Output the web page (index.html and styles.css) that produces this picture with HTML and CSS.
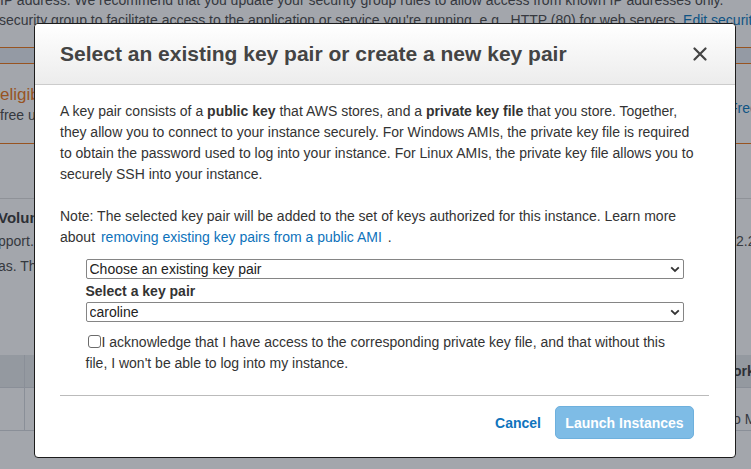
FILE: index.html
```html
<!DOCTYPE html>
<html lang="en">
<head>
<meta charset="utf-8">
<title>Select an existing key pair</title>
<link rel="stylesheet" href="styles.css">
</head>
<body>
<div class="page">
  <div class="notice">
    <p class="line">IP address. We recommend that you update your security group rules to allow access from known IP addresses only.</p>
    <p class="line line-shift">security group to facilitate access to the application or service you're running, e.g., HTTP (80) for web servers. <a class="page-link">Edit security groups</a></p>
  </div>
  <div class="strip"></div>
  <div class="warn">
    <div class="warn-left">
      <p class="warn-title">eligible</p>
      <p class="warn-text">free usage tier</p>
    </div>
    <div class="warn-right"><a class="page-link">Free tier</a></div>
  </div>
  <div class="volumes">
    <div class="vol-left">
      <p class="vol-title">Volumes</p>
      <p class="vol-text">pport.</p>
      <p class="vol-text">as. The</p>
    </div>
    <div class="vol-right">2.2</div>
  </div>
  <div class="table">
    <div class="thead">
      <div class="cell cell-narrow"></div>
      <div class="cell cell-wide"></div>
      <div class="cell cell-end th">orking</div>
    </div>
    <div class="trow">
      <div class="cell cell-narrow"></div>
      <div class="cell cell-wide"></div>
      <div class="cell cell-end">o M</div>
    </div>
  </div>
</div>
<div class="overlay"></div>

<div class="modal" role="dialog" aria-labelledby="modal-title">
  <div class="modal-header">
    <h2 id="modal-title" class="modal-title">Select an existing key pair or create a new key pair</h2>
    <button class="close" aria-label="Close">
      <svg width="14" height="14" viewBox="0 0 14 14"><path d="M1.5 1.5 L12.5 12.5 M12.5 1.5 L1.5 12.5" stroke="#444" stroke-width="2.2" stroke-linecap="round" fill="none"/></svg>
    </button>
  </div>
  <div class="modal-body">
    <p class="para">A key pair consists of a <b>public key</b> that AWS stores, and a <b>private key file</b> that you store. Together, they allow you to connect to your instance securely. For Windows AMIs, the private key file is required to obtain the password used to log into your instance. For Linux AMIs, the private key file allows you to securely SSH into your instance.</p>
    <p class="para">Note: The selected key pair will be added to the set of keys authorized for this instance. Learn more about <a class="link">removing existing key pairs from a public AMI</a> .</p>
    <div class="form">
      <div class="select-wrap">
        <select class="select"><option>Choose an existing key pair</option><option>Create a new key pair</option><option>Proceed without a key pair</option></select>
        <svg class="chevron" width="10" height="7" viewBox="0 0 10 7"><path d="M1.2 1.3 L5 5 L8.8 1.3" stroke="#333" stroke-width="1.8" fill="none"/></svg>
      </div>
      <label class="field-label">Select a key pair</label>
      <div class="select-wrap">
        <select class="select"><option>caroline</option></select>
        <svg class="chevron" width="10" height="7" viewBox="0 0 10 7"><path d="M1.2 1.3 L5 5 L8.8 1.3" stroke="#333" stroke-width="1.8" fill="none"/></svg>
      </div>
      <label class="ack"><input type="checkbox" class="check">I acknowledge that I have access to the corresponding private key file, and that without this file, I won't be able to log into my instance.</label>
    </div>
    <hr class="divider">
  </div>
  <div class="modal-footer">
    <a class="cancel">Cancel</a>
    <button class="launch">Launch Instances</button>
  </div>
</div>
</body>
</html>
```
FILE: styles.css
```css
* { box-sizing: border-box; }
html, body { margin: 0; padding: 0; }
body {
  width: 751px;
  height: 469px;
  overflow: hidden;
  background: #fff;
  font-family: "Liberation Sans", Arial, Helvetica, sans-serif;
  font-size: 14px;
  color: #444;
  position: relative;
}
p { margin: 0; }

/* background page */
.page { width: 751px; }
.notice { margin-top: -10px; }
.line { white-space: nowrap; line-height: 20px; overflow: hidden; }
.line-shift { margin-left: -1px; }
.page-link { color: #0073bb; }
.strip {
  margin-top: 17px;
  height: 17px;
  border-top: 1px solid #ec7211;
  border-bottom: 1px solid #ec7211;
  background: #e6eaf2;
}
.warn {
  display: grid;
  grid-template-columns: 736px 1fr;
  height: 80px;
  border-bottom: 1px solid #ec7211;
}
.warn-left { padding-top: 21px; white-space: nowrap; overflow: hidden; }
.warn-title { color: #ec7211; font-size: 17px; line-height: 20px; }
.warn-text { line-height: 20px; color: #444; }
.warn-right { padding-top: 34px; line-height: 20px; white-space: nowrap; overflow: hidden; }
.warn-right .page-link { display: inline-block; margin-left: -7px; }
.volumes {
  margin-top: 54px;
  border-top: 1px solid #ddd;
  display: grid;
  grid-template-columns: 736px 1fr;
  height: 147px;
}
.vol-left { padding-top: 9px; white-space: nowrap; overflow: hidden; margin-left: -2px; }
.vol-title { font-weight: bold; font-size: 15px; line-height: 20px; color: #333; }
.vol-text { line-height: 23px; margin-top: 2px; }
.vol-right { padding-top: 32px; line-height: 20px; white-space: nowrap; overflow: hidden; }
.table { margin-top: 10px; }
.thead, .trow { display: grid; grid-template-columns: 25px 708px 1fr; }
.thead { height: 33px; background: #e6e8eb; border-bottom: 1px solid #d5d8dc; }
.trow { height: 43px; border-bottom: 1px solid #d5d8dc; }
.cell { white-space: nowrap; overflow: hidden; }
.cell-narrow { border-right: 1px solid #d5d8dc; }
.cell-end { line-height: 20px; padding-top: 6px; }
.th { font-weight: bold; color: #333; }
.trow .cell-end { padding-top: 21px; }

.overlay {
  position: absolute;
  inset: 0;
  background: rgba(35, 42, 58, 0.42);
}

/* modal */
.modal {
  position: absolute;
  left: 34px;
  top: 23px;
  width: 702px;
  height: 435px;
  background: #fff;
  border: 1px solid #1c1c1c;
  border-radius: 4px;
  display: flex;
  flex-direction: column;
  color: #333;
}
.modal-header {
  flex: none;
  height: 61px;
  display: flex;
  align-items: center;
  justify-content: space-between;
  padding: 0 28px 0 25px;
  background: linear-gradient(#ffffff, #ececec);
  border-bottom: 1px solid #cccccc;
  border-radius: 4px 4px 0 0;
}
.modal-title {
  margin: 0;
  font-size: 21px;
  font-weight: bold;
  color: #444;
  line-height: 24px;
}
.close {
  border: 0;
  padding: 0;
  background: none;
  width: 14px;
  height: 14px;
  display: flex;
}
.modal-body {
  flex: none;
  padding: 16px 26px 0 25px;
}
.para {
  max-width: 644px;
  line-height: 21px;
  color: #333;
}
.para + .para { margin-top: 21px; }
.link { color: #0d72bb; padding: 0 2px; }
.form {
  width: 598px;
  margin: 11px auto 0;
}
.select-wrap { position: relative; }
.select {
  display: block;
  width: 100%;
  height: 20px;
  appearance: none;
  -webkit-appearance: none;
  border: 1px solid #858585;
  border-radius: 2px;
  background: #fff;
  font-family: inherit;
  font-size: 14px;
  color: #222;
  padding: 0 3px;
  line-height: 18px;
}
.chevron {
  position: absolute;
  right: 4px;
  top: 7px;
  pointer-events: none;
}
.field-label {
  display: block;
  font-weight: bold;
  line-height: 20px;
  margin: 2px 0 1px;
  color: #333;
}
.ack {
  display: block;
  margin-top: 10px;
  line-height: 21px;
  color: #333;
}
.check {
  appearance: none;
  -webkit-appearance: none;
  width: 13px;
  height: 13px;
  margin: 0 1px 0 2px;
  border: 1px solid #6b6b6b;
  border-radius: 3px;
  background: #fff;
  vertical-align: -1px;
}
.divider {
  margin: 21px 0 0;
  border: 0;
  border-top: 1px solid #bbb;
}
.modal-footer {
  flex: none;
  display: flex;
  justify-content: flex-end;
  align-items: center;
  gap: 14px;
  padding: 10px 41px 19px 0;
}
.cancel {
  font-weight: bold;
  color: #0f74bd;
  font-size: 14px;
}
.launch {
  width: 139px;
  height: 33px;
  border: 1px solid #6eb0dd;
  border-radius: 5px;
  background: #7ebce6;
  color: #fff;
  font-family: inherit;
  font-weight: bold;
  font-size: 14px;
  padding: 0;
}
```
